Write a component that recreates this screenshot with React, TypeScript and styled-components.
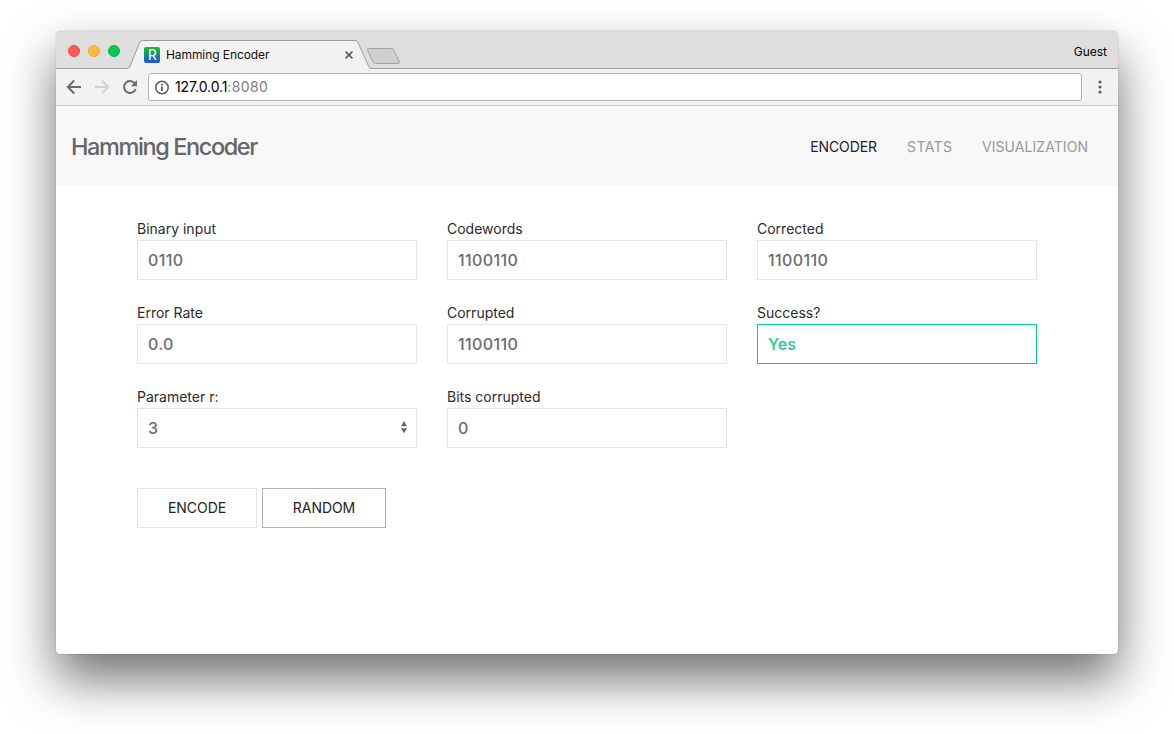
import React from 'react';
import styled, { createGlobalStyle } from 'styled-components';

const GlobalStyle = createGlobalStyle`
  *, *::before, *::after { box-sizing: border-box; }
  html, body { margin: 0; background: #fff; }
  body { font-family: Inter, "Liberation Sans", sans-serif; overflow: hidden; }
  button, input, select { font: inherit; margin: 0; }
`;

const Desktop = styled.div`
  width: 1174px;
  height: 734px;
  padding: 31px 56px 80px;
  background: #fff;
`;

const BrowserWindow = styled.div`
  display: flex;
  flex-direction: column;
  width: 1062px;
  height: 623px;
  border-radius: 5px 5px 4px 4px;
  background: #fff;
  box-shadow: 0 0 1px rgba(0, 0, 0, 0.55), 0 25px 50px rgba(0, 0, 0, 0.56);
  overflow: hidden;
`;

const TabStrip = styled.div`
  display: flex;
  height: 38px;
  background: linear-gradient(#d4d4d4 0, #dedede 1px);
  box-shadow: inset 0 -1px #a0a0a0;
`;

const Lights = styled.div`
  display: flex;
  gap: 8px;
  padding: 14px 0 0 12px;
  width: 71px;
`;

const Light = styled.span<{ $fill: string; $edge: string }>`
  width: 12px;
  height: 12px;
  border-radius: 50%;
  background: ${(p) => p.$fill};
  border: 1px solid ${(p) => p.$edge};
`;

const Tab = styled.div`
  position: relative;
  width: 245px;
  height: 38px;
  display: flex;
  align-items: center;
  padding: 11px 0 2px 17px;
`;

const TabShape = styled.svg`
  position: absolute;
  left: 0;
  top: 0;
`;

const TabTitle = styled.span`
  position: relative;
  margin-left: 6px;
  font-size: 12px;
  letter-spacing: -0.08px;
  color: #111;
  flex: 1;
`;

const TabIcon = styled.svg`
  position: relative;
  flex: none;
`;

const CloseIcon = styled(TabIcon)`
  margin-right: 19px;
`;

const NewTab = styled.svg`
  margin: 16px 0 0 -7px;
`;

const Profile = styled.span`
  margin-left: auto;
  padding: 13px 11px 0 0;
  font-size: 12px;
  line-height: 16px;
  color: #000;
`;

const Toolbar = styled.div`
  display: flex;
  align-items: center;
  height: 37px;
  background: #f2f2f2;
  border-bottom: 1px solid #cfcfcf;
  color: #6a6a6a;
`;

const NavIcons = styled.svg`
  flex: none;
`;

const AddressBar = styled.div`
  display: flex;
  align-items: center;
  width: 934px;
  height: 28px;
  padding-left: 6px;
  border: 1px solid #b4b4b4;
  border-radius: 3px;
  background: #fff;
`;

const Url = styled.span`
  margin-left: 6px;
  padding-bottom: 2px;
  font-size: 14px;
  letter-spacing: -0.1px;
  color: #000;
`;

const Port = styled.span`
  color: #808080;
  letter-spacing: 0.35px;
`;

const Header = styled.header`
  display: flex;
  align-items: center;
  justify-content: space-between;
  height: 80px;
  padding: 1px 30px 0 15px;
  background: #f8f8f8;
`;

const Title = styled.h1`
  margin: 0;
  font-size: 23.5px;
  line-height: 30px;
  font-weight: 500;
  letter-spacing: -1.4px;
  color: #666;
`;

const Nav = styled.nav`
  display: flex;
  gap: 30px;
`;

const NavItem = styled.a<{ $active?: boolean; $spacing: number }>`
  font-size: 14px;
  letter-spacing: ${(p) => p.$spacing}px;
  margin-right: ${(p) => -p.$spacing}px;
  color: ${(p) => (p.$active ? '#222' : '#999')};
`;

const Form = styled.main`
  width: 900px;
  margin: 30px 0 0 81px;
`;

const Columns = styled.div`
  display: grid;
  grid-template-columns: repeat(3, 280px);
  gap: 30px;
`;

const Column = styled.div`
  display: flex;
  flex-direction: column;
  gap: 20px;
`;

const Field = styled.label`
  display: block;
`;

const Label = styled.span`
  display: block;
  height: 24px;
  padding-top: 2px;
  font-size: 14px;
  line-height: 21px;
  letter-spacing: 0;
  color: #2b2b2b;
`;

const Value = styled.div<{ $success?: boolean }>`
  display: flex;
  align-items: center;
  justify-content: space-between;
  height: 40px;
  padding: 0 8px 0 10px;
  border: 1px solid ${(p) => (p.$success ? '#0c9' : '#e5e5e5')};
  background: #fff;
  font-size: 16px;
  font-weight: 500;
  letter-spacing: ${(p) => (p.$success ? 0.1 : 0.38)}px;
  color: ${(p) => (p.$success ? '#14ce92' : '#6c6c6c')};
`;

const Actions = styled.div`
  display: flex;
  gap: 5px;
  margin-top: 40px;
`;

const Button = styled.button<{ $strong?: boolean; $width: number }>`
  width: ${(p) => p.$width}px;
  height: 40px;
  padding: 0 0 2px;
  border: 1px solid ${(p) => (p.$strong ? '#b2b2b2' : '#e5e5e5')};
  background: #fff;
  font-size: 14px;
  letter-spacing: -0.05px;
  color: #222;
`;

type FieldData = { label: string; value: string; success?: boolean; select?: boolean };

const columns: FieldData[][] = [
  [
    { label: 'Binary input', value: '0110' },
    { label: 'Error Rate', value: '0.0' },
    { label: 'Parameter r:', value: '3', select: true },
  ],
  [
    { label: 'Codewords', value: '1100110' },
    { label: 'Corrupted', value: '1100110' },
    { label: 'Bits corrupted', value: '0' },
  ],
  [
    { label: 'Corrected', value: '1100110' },
    { label: 'Success?', value: 'Yes', success: true },
  ],
];

export default function App() {
  return (
    <Desktop>
      <GlobalStyle />
      <BrowserWindow>
        <TabStrip>
          <Lights>
            <Light $fill="#ff5a57" $edge="#ee4a49" />
            <Light $fill="#ffba40" $edge="#eda838" />
            <Light $fill="#06c852" $edge="#05b348" />
          </Lights>
          <Tab>
            <TabShape width="245" height="38" viewBox="0 0 245 38">
              <path d="M0 38 L1 37.5 Q2 37.3 2.6 36 L12.8 11.3 Q13.7 9.5 15.5 9.5 H228 Q230 9.5 230.9 11.3 L242 36 Q242.6 37.5 244 37.5 L245 38Z" fill="#f2f2f2" />
              <path d="M0 37.5 Q2 37.3 2.6 36 L12.8 11.3 Q13.7 9.5 15.5 9.5 H228 Q230 9.5 230.9 11.3 L242 36 Q242.6 37.5 245 37.5" fill="none" stroke="#9c9c9c" />
            </TabShape>
            <TabIcon width="16" height="16" viewBox="0 0 16 16">
              <defs>
                <linearGradient id="fav" x1="0" y1="0" x2="0" y2="1">
                  <stop offset="0" stopColor="#0bc71c" />
                  <stop offset="1" stopColor="#2150e8" />
                </linearGradient>
              </defs>
              <rect width="16" height="16" rx="2" fill="url(#fav)" />
              <text x="8.3" y="13.3" textAnchor="middle" fontSize="14" fontFamily="Roboto, sans-serif" fill="#fff">R</text>
            </TabIcon>
            <TabTitle>Hamming Encoder</TabTitle>
            <CloseIcon width="8" height="8" viewBox="0 0 8 8">
              <path d="M.6.6 7.4 7.4M7.4.6.6 7.4" stroke="#5a5a5a" strokeWidth="1.6" />
            </CloseIcon>
          </Tab>
          <NewTab width="36" height="19" viewBox="0 0 36 19">
            <path d="M3.6 1.5 H26.5 Q28 1.5 28.7 2.8 L34.3 15 Q34.8 16.5 33.3 16.5 H10.5 Q9 16.5 8.3 15.2 L2.5 3 Q2 1.5 3.6 1.5Z" fill="#d0d0d0" stroke="#a3a3a3" />
          </NewTab>
          <Profile>Guest</Profile>
        </TabStrip>
        <Toolbar>
          <NavIcons width="92" height="36" viewBox="0 0 92 36" fill="none" strokeWidth="2">
            <path d="M25 18H12M18.2 11.5 11.8 18l6.4 6.5" stroke="#6a6a6a" />
            <path d="M39 18h13M45.8 11.5l6.4 6.5-6.4 6.5" stroke="#d2d2d2" />
            <path d="M78.7 14.2A6 6 0 1 0 79.7 20" stroke="#6a6a6a" />
            <path d="M81 11v6.2h-6.2z" fill="#6a6a6a" />
          </NavIcons>
          <AddressBar>
            <svg width="14" height="15" viewBox="0.5 0 14 15">
              <circle cx="7.5" cy="7.5" r="6.2" fill="none" stroke="#5a5a5a" strokeWidth="1.5" />
              <path d="M7.5 6.6v4.4M7.5 3.8v1.7" stroke="#505050" strokeWidth="1.7" />
            </svg>
            <Url>127.0.0.1<Port>:8080</Port></Url>
          </AddressBar>
          <NavIcons width="36" height="36" viewBox="0 0 36 36" fill="#5f5f5f">
            <circle cx="18" cy="13" r="1.6" />
            <circle cx="18" cy="18" r="1.6" />
            <circle cx="18" cy="23" r="1.6" />
          </NavIcons>
        </Toolbar>
        <Header>
          <Title>Hamming Encoder</Title>
          <Nav>
            <NavItem $active $spacing={-0.1}>ENCODER</NavItem>
            <NavItem $spacing={0.4}>STATS</NavItem>
            <NavItem $spacing={0.07}>VISUALIZATION</NavItem>
          </Nav>
        </Header>
        <Form>
          <Columns>
            {columns.map((fields, i) => (
              <Column key={i}>
                {fields.map((f) => (
                  <Field key={f.label}>
                    <Label>{f.label}</Label>
                    <Value $success={f.success}>
                      <span>{f.value}</span>
                      {f.select && (
                        <svg width="8" height="14" viewBox="0 0 8 14" fill="#666">
                          <path d="M4 0 7 5.2H1zM4 12.3 7 7.2H1z" />
                        </svg>
                      )}
                    </Value>
                  </Field>
                ))}
              </Column>
            ))}
          </Columns>
          <Actions>
            <Button $width={120}>ENCODE</Button>
            <Button $strong $width={124}>RANDOM</Button>
          </Actions>
        </Form>
      </BrowserWindow>
    </Desktop>
  );
}
